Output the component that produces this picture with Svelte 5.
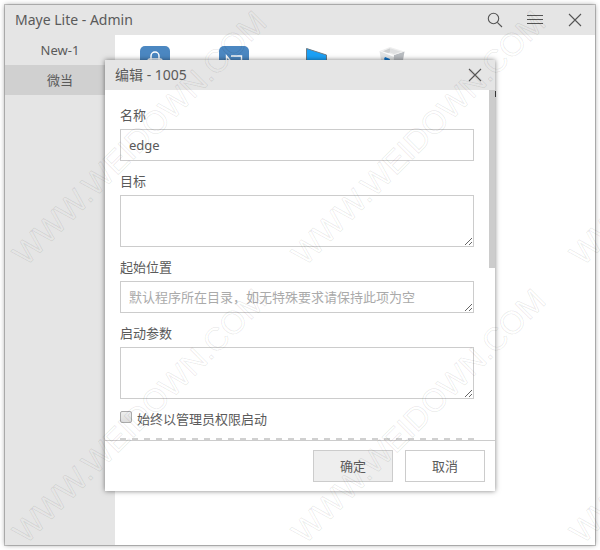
<script lang="ts">
    // State
    let groups = $state(['New-1', '微当']);
    let activeGroup = $state('微当');
    let form = $state({
        name: 'edge',
        target: '',
        startIn: '',
        args: '',
        runAsAdmin: false,
    });

    const stamp = 'WWW.WEIDOWN.COM';
    const stampTiles = [
        { x: 26, y: 267 },
        { x: 305, y: 267 },
        { x: 583, y: 267 },
        { x: 26, y: 545 },
        { x: 305, y: 545 },
        { x: 583, y: 545 },
    ];
</script>

{#snippet cross()}
    <svg width="14" height="14" viewBox="0 0 14 14" aria-hidden="true">
        <path d="M1 1L13 13M13 1L1 13" />
    </svg>
{/snippet}

<div class="page">
    <div class="window">
        <header class="bar">
            <span class="title">Maye Lite - Admin</span>
            <button class="icon-btn" aria-label="Search">
                <svg width="16" height="16" viewBox="0 0 16 16" aria-hidden="true">
                    <circle cx="6.5" cy="6.5" r="5.2" />
                    <path d="M10.3 10.3L15 15" />
                </svg>
            </button>
            <button class="icon-btn" aria-label="Menu">
                <svg width="16" height="10" viewBox="0 0 16 10" aria-hidden="true">
                    <path d="M0 .5H16M0 4.5H16M0 8.5H16" />
                </svg>
            </button>
            <button class="icon-btn" aria-label="Close">{@render cross()}</button>
        </header>

        <div class="content">
            <nav class="sidebar">
                {#each groups as group (group)}
                    <button
                        class="group"
                        class:active={group === activeGroup}
                        onclick={() => (activeGroup = group)}>{group}</button>
                {/each}
            </nav>

            <main class="shortcuts">
                <div class="shortcut">
                    <svg width="32" height="32" viewBox="0 0 32 32" aria-hidden="true">
                        <rect x="1" width="30" height="30" rx="5" fill="#4b87c1" />
                        <path d="M12 14V10a4 4 0 0 1 8 0V14" fill="none" stroke="#fff" stroke-width="1.5" />
                        <rect x="9" y="13" width="14" height="10" rx="2" fill="none" stroke="#fff" stroke-width="1.5" />
                    </svg>
                </div>
                <div class="shortcut">
                    <svg width="32" height="32" viewBox="0 0 32 32" aria-hidden="true">
                        <rect x="1" width="30" height="30" rx="5" fill="#4b87c1" />
                        <path d="M8.500 22V10L20 24M13 10H23.500V22H8.500" fill="none" stroke="#fff" stroke-width="1.400" />
                    </svg>
                </div>
                <div class="shortcut">
                    <svg width="32" height="32" viewBox="0 0 32 32" aria-hidden="true">
                        <path d="M9.500 2.500L29.500 9V26L9.500 20Z" fill="#1ba1f7" stroke="#6c7b85" />
                    </svg>
                </div>
                <div class="shortcut">
                    <svg width="32" height="32" viewBox="0 0 32 32" aria-hidden="true">
                        <path d="M3.500 5L18 11L17 30L7 26Z" fill="#e2e4e5" />
                        <path d="M18 9L28.500 5.500L25 26L17 30Z" fill="#b9bdc1" />
                        <path d="M3.500 5L14 1L28.500 5.500L18 9Z" fill="#efefef" />
                        <path d="M7 5.300L14 2.300V6.500L12 7Z" fill="#cfd1d2" />
                        <path d="M14 2.300L25 5.700L18 8L14 6.500Z" fill="#dfe0e1" />
                        <path d="M8 13L9 11L14 13L12 19Z" fill="#1173c7" />
                    </svg>
                </div>
                <div class="shortcut last"><i class="tick"></i></div>
            </main>
        </div>

        <div class="overlay">
            <div class="dialog" role="dialog" aria-labelledby="dialog-title">
                <header class="bar">
                    <span class="title" id="dialog-title">编辑 - 1005</span>
                    <button class="icon-btn" aria-label="Close">{@render cross()}</button>
                </header>

                <div class="dialog-body">
                    <form class="fields" id="edit-form">
                        <label for="name">名称</label>
                        <input id="name" type="text" bind:value={form.name} />
                        <label for="target">目标</label>
                        <textarea id="target" bind:value={form.target}></textarea>
                        <label for="start-in">起始位置</label>
                        <textarea
                            id="start-in"
                            class="short"
                            placeholder="默认程序所在目录，如无特殊要求请保持此项为空"
                            bind:value={form.startIn}></textarea>
                        <label for="args">启动参数</label>
                        <textarea id="args" bind:value={form.args}></textarea>
                        <label class="check">
                            <input type="checkbox" bind:checked={form.runAsAdmin} />
                            <span>始终以管理员权限启动</span>
                        </label>
                        <div class="divider"></div>
                    </form>
                    <div class="track"><div class="thumb"></div></div>
                </div>

                <footer>
                    <button class="btn primary" type="button">确定</button>
                    <button class="btn" type="button">取消</button>
                </footer>
            </div>
        </div>
    </div>

    <svg class="stamp" aria-hidden="true">
        {#each stampTiles as tile}
            <text transform="translate({tile.x} {tile.y}) rotate(-45)">{stamp}</text>
        {/each}
    </svg>
</div>

<style>
    :global(body) {
        background: #fff;
    }
    .page {
        position: relative;
        box-sizing: border-box;
        min-height: 100vh;
        padding: 5px;
        overflow: hidden;
        color: #5a5a5a;
        font-family: 'Noto Sans', 'Noto Sans CJK SC', sans-serif;
        font-size: 13px;
        line-height: 20px;
    }
    .window {
        position: relative;
        display: flex;
        flex-direction: column;
        min-height: calc(100vh - 10px);
        background: #fff;
        box-shadow: 0 0 0 1px rgba(0, 0, 0, 0.2), 0 0 5px rgba(0, 0, 0, 0.4);
    }
    button, input, textarea {
        box-sizing: border-box;
        margin: 0;
        font: inherit;
        color: inherit;
        border-radius: 0;
        outline: none;
    }
    button {
        padding: 0;
        border: 0;
        background: none;
    }
    .bar {
        display: flex;
        align-items: center;
        height: 30px;
        background: #e5e5e5;
    }
    .title {
        flex: 1;
        padding-left: 10px;
        font-size: 14px;
    }
    .icon-btn {
        display: flex;
        align-items: center;
        justify-content: center;
        width: 40px;
        height: 30px;
    }
    .icon-btn svg {
        fill: none;
        stroke: #555;
        stroke-width: 1.1;
    }
    .content {
        flex: 1;
        display: flex;
    }
    .sidebar {
        width: 110px;
        background: #e5e5e5;
    }
    .group {
        display: block;
        width: 100%;
        height: 30px;
    }
    .group.active {
        background: #d0d0d0;
    }
    .shortcuts {
        flex: 1;
        display: flex;
        align-items: flex-start;
        padding-top: 11px;
    }
    .shortcut {
        display: flex;
        justify-content: center;
        width: 79px;
    }
    .shortcut.last {
        width: 65px;
        padding-top: 45px;
        justify-content: flex-end;
    }
    .tick {
        width: 3px;
        height: 6px;
        background: #444;
    }
    .overlay {
        position: absolute;
        inset: 0;
        display: flex;
        justify-content: center;
        align-items: flex-start;
        padding-top: 55px;
    }
    .dialog {
        width: 390px;
        background: #fff;
        box-shadow: 0 0 5px rgba(0, 0, 0, 0.5);
    }
    .dialog-body {
        display: flex;
    }
    .fields {
        flex: 1;
        display: flex;
        flex-direction: column;
        padding: 15px 15px 0;
    }
    .fields label {
        margin-bottom: 4px;
    }
    .fields > input,
    textarea {
        width: 100%;
        height: 32px;
        margin-bottom: 10px;
        padding: 5px 8px;
        border: 1px solid #ccc;
        background: #fff;
    }
    textarea {
        display: block;
        height: 52px;
        resize: both;
    }
    textarea.short {
        height: 32px;
        overflow: hidden;
    }
    textarea::placeholder {
        color: #aaa;
    }
    .fields .check {
        display: flex;
        align-items: flex-start;
        gap: 5px;
        margin-bottom: 9px;
    }
    .check input {
        appearance: none;
        width: 12px;
        height: 12px;
        margin-top: 2px;
        border: 1px solid #aaa;
        border-radius: 2px;
        background: linear-gradient(#eee, #ddd);
    }
    .divider {
        height: 2px;
        background: repeating-linear-gradient(90deg, #d0d0d0 0 6px, transparent 6px 12px);
    }
    .track {
        width: 6px;
    }
    .thumb {
        height: 178px;
        background: #ccc;
    }
    footer {
        display: flex;
        justify-content: flex-end;
        gap: 12px;
        padding: 9px 10px;
        border-top: 1px solid #ccc;
    }
    .btn {
        width: 80px;
        height: 32px;
        border: 1px solid #ccc;
        background: #fff;
    }
    .btn.primary {
        background: #eee;
    }
    .stamp {
        position: absolute;
        inset: 0;
        width: 100%;
        height: 100%;
        pointer-events: none;
    }
    .stamp text {
        font-family: 'Liberation Sans', sans-serif;
        font-size: 32px;
        fill: none;
        stroke: rgba(0, 0, 0, 0.08);
        stroke-width: 1;
        stroke-linejoin: round;
    }
</style>
